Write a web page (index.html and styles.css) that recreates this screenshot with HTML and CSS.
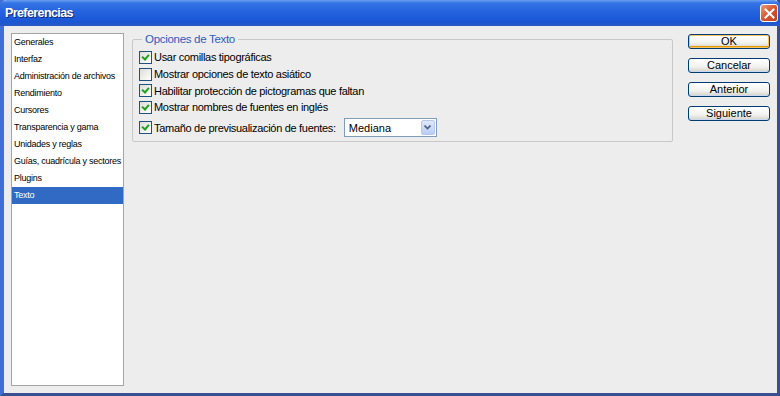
FILE: index.html
```html
<!DOCTYPE html>
<html lang="es">
<head>
<meta charset="utf-8">
<title>Preferencias</title>
<link rel="stylesheet" href="styles.css">
</head>
<body>
<div class="window">
  <div class="titlebar">
    <span class="title">Preferencias</span>
    <span class="close"><svg width="11" height="11" viewBox="0 0 11 11"><path d="M1.5 1.5 L9.5 9.5 M9.5 1.5 L1.5 9.5" stroke="#fff" stroke-width="2" stroke-linecap="square"/></svg></span>
  </div>
  <div class="client">
    <ul class="list">
      <li>Generales</li>
      <li>Interfaz</li>
      <li>Administración de archivos</li>
      <li>Rendimiento</li>
      <li>Cursores</li>
      <li>Transparencia y gama</li>
      <li>Unidades y reglas</li>
      <li>Guías, cuadrícula y sectores</li>
      <li>Plugins</li>
      <li class="sel">Texto</li>
    </ul>
    <div class="main">
      <fieldset class="group">
        <legend>Opciones de Texto</legend>
        <label class="row"><span class="cb on"></span>Usar comillas tipográficas</label>
        <label class="row"><span class="cb"></span>Mostrar opciones de texto asiático</label>
        <label class="row"><span class="cb on"></span>Habilitar protección de pictogramas que faltan</label>
        <label class="row"><span class="cb on"></span>Mostrar nombres de fuentes en inglés</label>
        <div class="row last"><span class="cb on"></span>Tamaño de previsualización de fuentes:
          <span class="select"><span class="val">Mediana</span><span class="arrow"><svg width="7" height="5" viewBox="0 0 7 5"><path d="M0.5 0.5 L3.5 3.5 L6.5 0.5" fill="none" stroke="#4d6185" stroke-width="1.6"/></svg></span></span>
        </div>
      </fieldset>
    </div>
    <div class="buttons">
      <button class="btn default">OK</button>
      <button class="btn">Cancelar</button>
      <button class="btn">Anterior</button>
      <button class="btn">Siguiente</button>
    </div>
  </div>
</div>
</body>
</html>
```
FILE: styles.css
```css
html, body {
  margin: 0;
  padding: 0;
  width: 780px;
  height: 396px;
  overflow: hidden;
  background: #ededed;
}
.window {
  width: 780px;
  height: 396px;
  box-sizing: border-box;
  display: flex;
  flex-direction: column;
  background: #ededed;
  border-left: 4px solid #3f6fd4;
  border-right: 3px solid #3a4f91;
  border-bottom: 3px solid #3a4f91;
  font-family: "Liberation Sans", Arial, sans-serif;
  color: #000;
}
.titlebar {
  height: 26px;
  margin-left: -4px;
  margin-right: -3px;
  display: flex;
  align-items: center;
  justify-content: space-between;
  padding: 0 2px 0 5px;
  background: linear-gradient(#6aa0f2 0px, #3574e4 3px, #2462de 12px, #1a56d4 22px, #2a58c0 26px);
  border-radius: 6px 6px 0 0;
}
.title {
  color: #fff;
  font-weight: bold;
  font-size: 12.5px;
  letter-spacing: -0.6px;
  font-family: "Liberation Sans", Arial, sans-serif;
  text-shadow: 1px 1px 0 #0b2a7a;
}
.close {
  width: 16px;
  height: 16px;
  border: 1px solid #fff;
  border-radius: 3px;
  background: linear-gradient(135deg, #eb9a7c, #d8562f 50%, #c0401e);
  display: flex;
  align-items: center;
  justify-content: center;
}
.client {
  flex: 1;
  display: flex;
  padding: 7px 7px 7px 7px;
}
.list {
  list-style: none;
  margin: 0;
  padding: 0;
  width: 113px;
  height: 353px;
  box-sizing: border-box;
  border: 1px solid #a5a5a5;
  background: #fff;
  font-size: 9px;
  letter-spacing: -0.25px;
  font-family: "Liberation Sans", Arial, sans-serif;
}
.list li {
  height: 17px;
  line-height: 17px;
  padding-left: 2px;
  white-space: nowrap;
}
.list li.sel {
  background: #316ac5;
  color: #fff;
}
.main {
  margin-left: 8px;
  width: 541px;
}
.group {
  margin: -1px 0 0 0;
  padding: 3px 0 3px 6px;
  border: 1px solid #c8c8c8;
  border-radius: 2px;
  box-sizing: border-box;
  width: 541px;
}
.group legend {
  color: #2e5cc0;
  font-size: 11.5px;
  letter-spacing: -0.3px;
  padding: 0 3px;
  margin-left: 3px;
  line-height: 14px;
}
.row {
  display: flex;
  align-items: center;
  height: 16.7px;
  font-size: 11px;
  letter-spacing: -0.3px;
  white-space: nowrap;
}
.row.last {
  height: 20px;
  margin-top: 2px;
}
.cb {
  width: 11px;
  height: 11px;
  border: 1px solid #1c5180;
  background: linear-gradient(135deg, #dcdcd7, #fff);
  margin-right: 2px;
  position: relative;
  flex: none;
}
.cb.on::after {
  content: "";
  position: absolute;
  left: 3px;
  top: 1px;
  width: 3px;
  height: 5px;
  border-right: 2px solid #21a121;
  border-bottom: 2px solid #21a121;
  transform: rotate(40deg);
}
.select {
  margin-left: 8px;
  width: 93px;
  height: 19px;
  box-sizing: border-box;
  border: 1px solid #7f9db9;
  background: #fff;
  display: flex;
  align-items: center;
  justify-content: space-between;
  padding: 1px;
  letter-spacing: 0;
}
.select .val {
  padding-left: 3px;
}
.select .arrow {
  width: 14px;
  height: 15px;
  box-sizing: border-box;
  border: 1px solid #b7c8ea;
  border-radius: 2px;
  background: linear-gradient(#dfe8fb, #b9cdf5);
  display: flex;
  align-items: center;
  justify-content: center;
}
.buttons {
  margin-left: auto;
  width: 82px;
  display: flex;
  flex-direction: column;
  gap: 9px;
  padding-top: 1px;
}
.btn {
  height: 15px;
  width: 82px;
  padding: 0;
  margin: 0;
  box-sizing: border-box;
  border: 1px solid #003c74;
  border-radius: 3px;
  background: linear-gradient(#ffffff, #f2f2ef 60%, #d6d0c5);
  font-family: "Liberation Sans", Arial, sans-serif;
  font-size: 11px;
  line-height: 13px;
  color: #000;
  box-shadow: inset 0 -1px 0 #c8d8f4;
}
.btn.default {
  box-shadow: inset 0 0 0 1px #f5c45e, inset 0 -2px 0 #e59700;
}
```
